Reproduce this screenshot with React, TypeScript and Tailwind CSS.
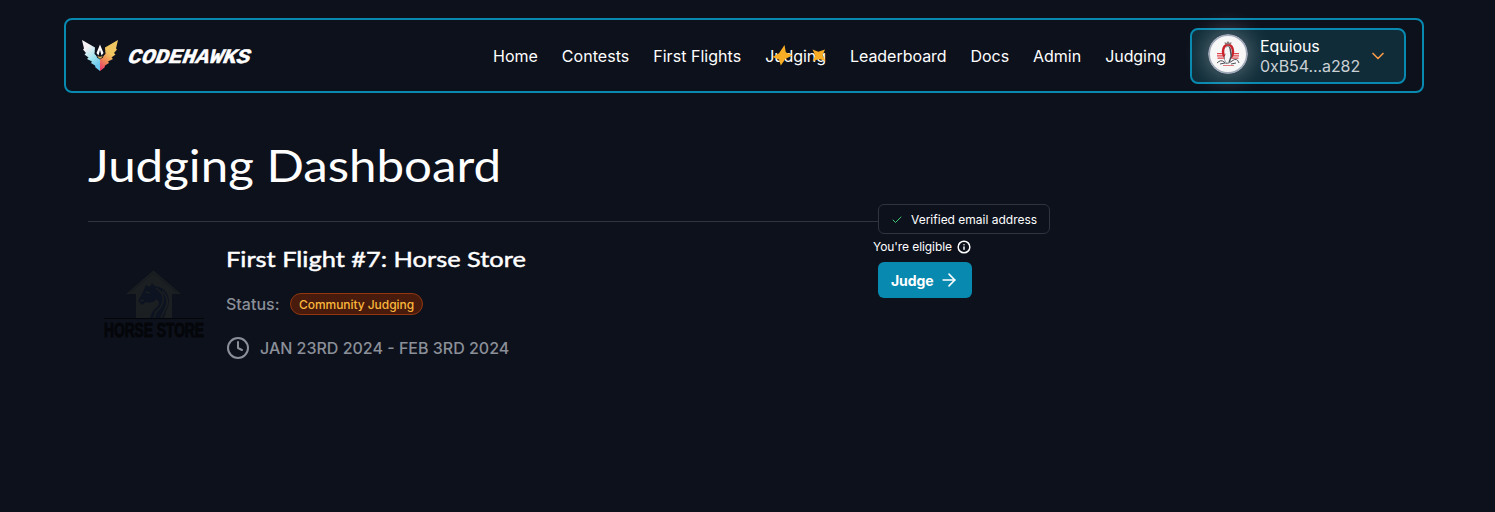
import React from "react";
import { ArrowRight, Check, ChevronDown, Clock, Info } from "lucide-react";

function Hawk() {
  return (
    <svg className="h-8 w-9" viewBox="0 0 36 32">
      <defs>
        <linearGradient id="wingLeft" x1="0" y1="0" x2="0.5" y2="1">
          <stop offset="0.3" stopColor="#f6f2f4" />
          <stop offset="0.7" stopColor="#9fe3ee" />
          <stop offset="1" stopColor="#6cc9ee" />
        </linearGradient>
        <linearGradient id="wingRight" x1="0.7" y1="0" x2="0.2" y2="1">
          <stop offset="0.4" stopColor="#f0c661" />
          <stop offset="0.7" stopColor="#f08a56" />
          <stop offset="1" stopColor="#ee3f6b" />
        </linearGradient>
      </defs>
      <path
        d="M0 0L13 7.500L12.5 14L18 19V31L13.5 27.500L13 25.500L9 23L10 21.500L5 19L6.500 17.500L2.500 14.500L4 13L1 9.500L2 8.500Z"
        fill="url(#wingLeft)"
      />
      <path
        d="M36 0L23 7.500L23.500 14L18 19V31L22.500 27.500L23 25.500L27 23L26 21.500L31 19L29.500 17.500L33.500 14.500L32 13L35 9.500L34 8.500Z"
        fill="url(#wingRight)"
      />
      <path d="M18 3L22.500 12.500L21 17.500L18 19.500L15 17.500L13.500 12.500Z" fill="#0c101c" />
      <path d="M18 4.500L21.500 13L19.500 15.500L18 10L16.500 15.500L14.500 13Z" fill="#fff" />
      <path d="M15 15.500Q18 18 21 15.500L19 18.500H17Z" fill="#e4b75b" />
    </svg>
  );
}

function Wordmark() {
  return (
    <svg className="h-6 w-[126px] overflow-visible" viewBox="0 0 126 24">
      <text
        x="0"
        y="19"
        transform="translate(5.5 0) skewX(-20)"
        textLength="122"
        lengthAdjust="spacingAndGlyphs"
        fontSize="20.5"
        className="fill-white stroke-white stroke-[0.5] font-['Liberation_Mono',monospace] font-bold"
      >
        CODEHAWKS
      </text>
    </svg>
  );
}

function Avatar() {
  return (
    <svg
      className="size-10 rounded-full shadow-[0_0_22px_4px_rgba(255,255,255,0.28)]"
      viewBox="0 0 40 40"
    >
      <circle cx="20" cy="20" r="19" fill="#f7f7f8" stroke="#a2a9b8" strokeWidth="2" />
      <path d="M9 19h7v1.200H9zM9 21.300h7v1.200H9zM9.500 23.600h7v1.200h-7zM24 19h7v1.200h-7zM24 21.300h7v1.200h-7zM23.500 23.600h7v1.200h-7z" fill="#e0474b" />
      <ellipse cx="20" cy="17.5" rx="5" ry="7" fill="none" stroke="#c9242c" strokeWidth="2.500" />
      <path d="M16.500 8l2 1L20 7l1.500 2 2-1-.5 2.500h-6z" fill="#8a7777" />
      <path d="M18 13q4-2 5 2l1 7-2 6h-5l-1-5 2-4z" fill="#4c5159" />
      <path d="M18 13.500q3-2 3.500 1.500l1 7-2 6h-3l-1-5 1.500-4z" fill="#f4f4f4" />
      <path d="M9 29q4-4 7-1t8-1 7 2M12 30l5-1M23 30l5-1" fill="none" stroke="#4f5058" strokeWidth="1" />
      <path d="M15 31.500h11" stroke="#dd797b" strokeWidth="1.200" />
    </svg>
  );
}

function Stars() {
  return (
    <svg className="absolute top-0 left-[5px] h-8 w-14" viewBox="0 0 56 32" fill="#f9ad25">
      <path d="M14.500 1L15.800 8.200L22.500 11.500L15.500 14.700L10.800 21.500L9 15.500L2.500 13L9 9.200Z" />
      <path d="M42.500 5.500L48.300 7.800L55 5.500L52.600 11.200L55.500 17L49.300 15L42.500 17.300L45.300 11.500Z" />
    </svg>
  );
}

function HorseStore() {
  return (
    <svg className="h-[72px] w-[102px] overflow-visible" viewBox="0 0 102 72">
      <path d="M50.500 1.500L78 25H69V49H33V25H23Z" fill="#1b1f21" />
      <path d="M27 23.500L50.500 4L74 23.500" fill="none" stroke="#121820" strokeWidth="0.8" />
      <path
        d="M43 16L47 18L49 14L52 17Q65 19 66 32Q66 37 63 42L61 49H47Q48 43 54 38Q58 34 54 30Q49 35 43 33L39 36L35 32L40 23Z"
        fill="#0d1320"
      />
      <path
        d="M53 19Q62 25 60 33Q58 39 53 43L51 49M59 22Q68 31 62 40L58 49M43 23L47 24M37 32L41 31"
        fill="none"
        stroke="#1b1f21"
        strokeWidth="1.500"
      />
      <path d="M1 49.500H101" stroke="#040609" strokeWidth="1" />
      <text
        x="1"
        y="68"
        textLength="100"
        lengthAdjust="spacingAndGlyphs"
        fontSize="20"
        className="fill-[#040609] stroke-[#040609] stroke-[0.9] font-['Liberation_Sans_Narrow','Liberation_Sans',sans-serif] font-bold"
      >
        HORSE STORE
      </text>
    </svg>
  );
}

function Header() {
  return (
    <header className="flex h-[75px] w-[1360px] items-center justify-between rounded-lg border-2 border-[#0889b0] px-4">
      <div className="flex items-center gap-2.5">
        <Hawk />
        <Wordmark />
      </div>
      <nav className="flex items-center gap-6 tracking-[-0.08px] whitespace-nowrap">
        <a className="tracking-normal">Home</a>
        <a className="tracking-[0.03px]">Contests</a>
        <a className="tracking-[0.03px]">First Flights</a>
        <a className="relative">
          Judging
          <Stars />
        </a>
        <a className="tracking-[-0.03px]">Leaderboard</a>
        <a>Docs</a>
        <a className="tracking-normal">Admin</a>
        <a>Judging</a>
        <button className="flex h-14 w-[216px] items-center rounded-lg border-2 border-[#0889b0] bg-[#0f2c38] pl-4 text-left">
          <span className="-mt-1">
            <Avatar />
          </span>
          <span className="ml-3 w-[100px] leading-5">
            <span className="block">Equious</span>
            <span className="block text-[#cbd0d4]">0xB54...a282</span>
          </span>
          <ChevronDown className="ml-2 size-5 text-[#f59a4a]" strokeWidth={2} />
        </button>
      </nav>
    </header>
  );
}

function Contest() {
  return (
    <section className="flex w-[884px] items-start">
      <div className="w-[138px] pt-[47px] pl-[15px]">
        <HorseStore />
      </div>
      <div className="flex-1 pt-[21px]">
        <h2 className="h-8 text-[22px] leading-8 whitespace-nowrap font-['Lato',sans-serif] font-normal [-webkit-text-stroke:0.45px_white]">
          <span className="inline-block origin-left scale-x-[1.155]">First Flight #7: Horse Store</span>
        </h2>
        <div className="mt-[17px] flex h-6 items-center gap-2.5 font-medium text-[#8a8f98]">
          <span className="w-[54px]">Status:</span>
          <span className="flex h-[22px] items-center rounded-full border border-[#92370f] bg-[#481b0c] px-2 pt-px text-[12px] tracking-[-0.05px] text-[#fbb73c]">
            Community Judging
          </span>
        </div>
        <div className="mt-5 flex h-6 items-center gap-2.5 font-medium text-[#8a8f98]">
          <Clock className="size-6" strokeWidth={2} />
          JAN 23RD 2024 - FEB 3RD 2024
        </div>
      </div>
      <div className="relative w-[98px] pt-4 text-[12px]">
        <div className="absolute top-[-18px] left-1 flex h-[30px] w-[172px] items-center gap-2 rounded-md border border-[#303440] bg-[#0d111c] pt-px pl-3 whitespace-nowrap">
          <Check className="size-3 text-[#4ade80]" strokeWidth={1.8} />
          Verified email address
        </div>
        <div className="-ml-px flex h-[18px] items-center gap-[5px] tracking-[-0.08px] whitespace-nowrap">
          You're eligible
          <Info className="size-3.5" strokeWidth={2.5} />
        </div>
        <button className="mt-1.5 ml-1 flex h-9 w-[94px] items-center gap-1.5 rounded-md bg-[#0889b0] pl-[13px] text-[14px] font-bold">
          <span className="w-[42px] tracking-[-0.06px]">Judge</span>
          <ArrowRight className="size-5" strokeWidth={1.9} />
        </button>
      </div>
    </section>
  );
}

export default function App() {
  return (
    <div className="h-[512px] w-full overflow-hidden bg-[#0d111c] pt-[18px] pl-16 text-base text-white font-['Inter',sans-serif]">
      <Header />
      <main className="pl-6">
        <h1 className="h-[129px] w-[884px] border-b border-[#303440] pt-10 text-[45px] leading-[64px] whitespace-nowrap font-['Lato',sans-serif]">
          <span className="inline-block origin-left scale-x-[1.095]">Judging Dashboard</span>
        </h1>
        <Contest />
      </main>
    </div>
  );
}
